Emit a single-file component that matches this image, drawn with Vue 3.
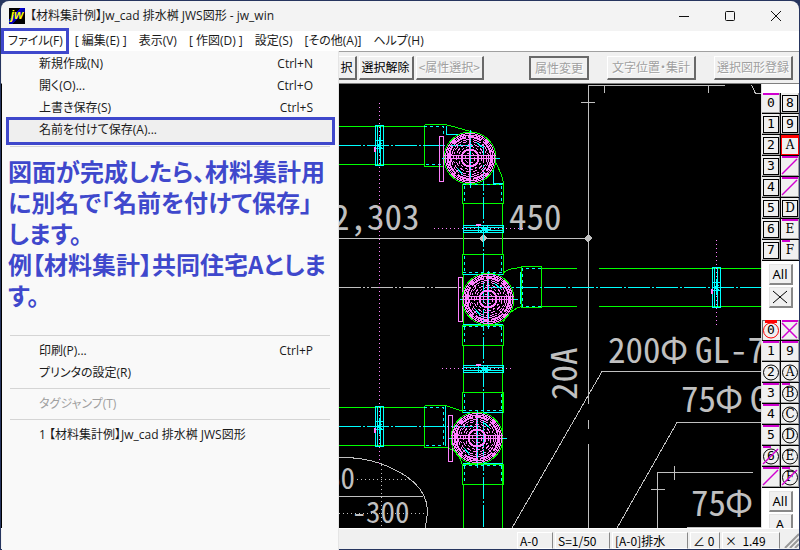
<script setup>
const menus = ['ファイル(F)', '[ 編集(E) ]', '表示(V)', '[ 作図(D) ]', '設定(S)', '[その他(A)]', 'ヘルプ(H)']

const fileItems = [
  { label: '新規作成(N)', key: 'Ctrl+N' },
  { label: '開く(O)...', key: 'Ctrl+O' },
  { label: '上書き保存(S)', key: 'Ctrl+S' },
  { label: '名前を付けて保存(A)...', key: '', active: true }
]

// Layer palettes, row by row (left cell, right cell)
const layers = [
  { t: '0', bar: 'full' }, { t: '8', frame: true },
  { t: '1', frame: true }, { t: '9', frame: true },
  { t: '2', frame: true }, { t: 'A', current: true },
  { t: '3', frame: true }, { t: '', name: 'B', bar: 'full', slash: true },
  { t: '4', frame: true }, { t: '', name: 'C', bar: 'full', slash: true },
  { t: '5', frame: true }, { t: 'D', frame: true },
  { t: '6', frame: true }, { t: 'E', bar: 'full' },
  { t: '7', frame: true }, { t: 'F', bar: 'half' }
]
const groups = [
  { t: '0', ring: true, currentGroup: true }, { t: '', name: '8', bar: 'full', slash: true, cross: true },
  { t: '1', bar: 'full' }, { t: '9', bar: 'full' },
  { t: '2', ring: true }, { t: 'A', ring: true },
  { t: '3', bar: 'full' }, { t: 'B', ring: true, bar: 'half' },
  { t: '4', bar: 'full' }, { t: 'C', ring: true },
  { t: '5', bar: 'full' }, { t: 'D', ring: true },
  { t: '6', ring: true, bar: 'half', slash: true }, { t: 'E', ring: true },
  { t: '', name: '7', bar: 'full', slash: true }, { t: 'F', ring: true, bar: 'half', slash: true }
]

const basins = [
  { x: 470, y: 158 },
  { x: 488, y: 299 },
  { x: 477, y: 438 }
]
const couplingsV = [{ x: 379, y: 145 }, { x: 716, y: 287 }, { x: 379, y: 426 }]
const couplingsH = [{ x: 483, y: 229 }, { x: 483, y: 369 }]
const sockets = [
  { y: 184, h: 19 },
  { y: 254, h: 20 },
  { y: 325, h: 20 },
  { y: 392, h: 20 },
  { y: 464, h: 20 }
]
</script>

<template>
  <div class="window">
    <header class="titlebar">
      <span class="logo">jw</span>
      <h1>【材料集計例】Jw_cad 排水桝 JWS図形 - jw_win</h1>
      <button class="win" aria-label="最小化"><svg width="12" height="12"><path d="M1 6.500H11" /></svg></button>
      <button class="win" aria-label="最大化"><svg width="12" height="12"><rect x="1.500" y="1.500" width="9" height="9" rx="1" /></svg></button>
      <button class="win" aria-label="閉じる"><svg width="12" height="12"><path d="M1 1L11 11M11 1L1 11" /></svg></button>
    </header>

    <nav class="menubar">
      <button v-for="(m, i) in menus" :key="m" :class="{ open: i === 0 }">{{ m }}</button>
    </nav>

    <div class="toolbar">
      <button>択</button>
      <button>選択解除</button>
      <button class="far" disabled>&lt;属性選択&gt;</button>
      <button class="apart default" disabled>属性変更</button>
      <button class="apart" disabled>文字位置・集計</button>
      <button disabled>選択図形登録</button>
    </div>

    <main class="work">
      <svg class="drawing" viewBox="1 84 760 444" preserveAspectRatio="xMaxYMin slice">
        <!-- dimension and leader lines -->
        <g class="gray">
          <path d="M588.500 85V404M588.500 420V429M588.500 444V528M588 85.500H725M604.500 85V93M708.500 85V93M581 102.500H595M751.500 85L755.500 93.500H761" />
          <path d="M339 238.500H588M512 528L602 371.500H761M617 528L677 422.500H761" />
          <path d="M657.500 528V472.500H753M674.500 466V480M651 489.500H665M687 527.500H761" />
          <path d="M339 457.500Q360 457 379 463Q427 480 427.500 511Q427 520 425 528M339 496.500H423" />
          <path d="M339 287.500H462" stroke-dasharray="22 2 2 2 2 2" />
          <path d="M357 479.500H410M339 513.500H427M381.500 465V528" stroke-dasharray="1 3" />
        </g>
        <path class="dot" d="M483 234L487 238L483 243L479 238ZM588 234L592 238L588 243L584 238Z" />

        <g class="cadtext">
          <text x="332" y="230">2,</text><text x="367" y="230">303</text>
          <text x="509" y="230">450</text>
          <text x="608" y="363">200</text><text x="660" y="363">Φ</text><text x="695" y="363">GL-7</text>
          <text x="681" y="412">75</text><text x="715" y="412">Φ</text><text x="750" y="412">G</text>
          <text x="691" y="516">75</text><text x="725" y="516">Φ</text>
          <text transform="translate(577 400) rotate(-90)">20A</text>
          <g class="small">
            <text x="326" y="489">60</text>
            <text x="352" y="523">-</text><text x="366" y="523">300</text>
          </g>
        </g>

        <!-- pipes -->
        <g class="green">
          <path d="M339 126.500H424M339 164.500H424M339 407.500H424M339 445.500H424" />
          <path d="M424.500 124.500H445.500L455 127L472 132M424.500 124.500V166.500H444M424.500 405.500H445.500L462 411M424.500 405.500V447.500H447L458 453L462 464" />
          <path d="M463.500 203V254M502.500 203V254M463.500 274V325M463.500 345V392M502.500 345V528M463.500 484V528" />
          <path d="M496 163Q503 177 503.500 184M503 273Q511 267 521 268M521 306.500Q510 310 503 322" />
          <path d="M521.500 266.500H541.500V307.500H521.500ZM541 268.500H577M541 306.500H577M599 268.500H761M599 306.500H761" />
          <rect v-for="s in sockets" :key="s.y" x="462.500" :y="s.y + 0.5" width="41" :height="s.h" />
        </g>
        <g class="cyan">
          <path d="M446.500 126V134.500H458M493.500 170V183.500H503M463 274.500H503M463 324.500H503M463 412.500H503M463 463.500H503M520.500 272V304M445.500 406V446" />
          <path d="M339 145.500H483.500V528M488 287.500H761M339 426.500H477" stroke-dasharray="22 2 2 2" />
          <g stroke-dasharray="3 3">
            <path d="M424 126.500H443.500V164.500H424M424 407.500H443.500V445.500H424M541 268.500H522.500V306.500H541" />
            <path v-for="s in sockets" :key="s.y" :d="`M464.500 ${s.y + 2}V${s.y + s.h - 1}M501.500 ${s.y + 2}V${s.y + s.h - 1}`" />
            <path d="M463 184.500H503M463 272.500H503M463 326.500H503M463 410.500H503M463 465.500H503" />
          </g>
        </g>
        <g class="pink">
          <path d="M379.500 103V465M434 228.500H526M442 368.500H514M716.500 240V326" stroke-dasharray="1 3" />
          <path d="M439.500 136.500H443.500V181.500H439.500ZM458.500 277.500H462.500V321.500H458.500ZM448.500 415.500H452V461.500H448.500Z" />
        </g>

        <g v-for="c in couplingsV" :key="'v' + c.x + c.y" :transform="`translate(${c.x} ${c.y})`">
          <path class="cyan" d="M-3.500 -19.500H4.500V20.500H-3.500ZM-1.500 -20V21M1.500 -20V21M-3 -4.500H4M-3 3.500H4M-2 -2L3 3M-2 3L3 -2M0 -8V8" />
          <path class="pinkfill" d="M-5 2h2v5h-2z" />
        </g>
        <g v-for="c in couplingsH" :key="'h' + c.y" :transform="`translate(${c.x} ${c.y})`">
          <path class="cyan" d="M-19.500 -3.500H20.500V3.500H-19.500ZM-20 -1.500H20M-20 1.500H20M-4.500 -3V3M4.500 -3V3M-3 -2L4 3M-3 3L4 -2M-1 0.500H8" />
          <path class="pinkfill" d="M-7 -5h5v2h-5z" />
        </g>

        <!-- drainage basins seen from above -->
        <g v-for="b in basins" :key="b.y" :transform="`translate(${b.x} ${b.y})`">
          <circle class="green" r="26" />
          <path class="cyan" d="M-28 0.500H30M0.500 -28V30" />
          <g class="pink">
            <circle r="24.500" />
            <circle r="23" />
            <circle r="21" class="bold" stroke-dasharray="14 2" />
            <circle r="18.500" stroke-dasharray="8 2" />
            <circle r="16.500" stroke-dasharray="4 2 2 2" />
            <circle r="14" stroke-dasharray="5 2" />
            <circle r="11.500" stroke-dasharray="3 2" />
            <circle r="8.500" class="bold" />
            <circle r="5" stroke-dasharray="3 2" />
            <path d="M-26 -2.500H26M-26 0.500H26M-0.500 -25V25M-17 -17L-12 -12M17 17L12 12M17 -17L12 -12M-17 17L-12 12M-22 -5V5M-20 -5V5M20 -5V5M22 -5V5" />
          </g>
          <path class="cyan" d="M6 -16L13 -10M-13 10L-7 17" />
        </g>
      </svg>

      <aside class="palette">
        <template v-for="(set, n) in [layers, groups]" :key="n">
          <div class="cells">
            <button
              v-for="(c, i) in set" :key="i" :aria-label="c.name || c.t"
              :class="{ frame: c.frame, current: c.current, group: c.currentGroup, latin: c.t >= 'A' }"
            >
              <span>{{ c.t }}</span>
              <svg viewBox="0 0 18 20" preserveAspectRatio="none">
                <circle v-if="c.ring" class="ring" cx="9" cy="10.500" r="7.500" />
                <path v-if="c.bar" class="bar" :d="c.bar === 'full' ? 'M1 1H17' : 'M1 1H9'" />
                <path v-if="c.slash" class="slash" d="M1 18L16 3" />
                <path v-if="c.cross" class="slash" d="M1 3L16 18" />
                <path v-if="c.currentGroup" class="top" d="M3 1.500H15" />
              </svg>
            </button>
          </div>
          <button class="wide">All</button>
          <button v-if="n === 0" class="wide" aria-label="×">
            <svg width="16" height="14"><path d="M1 1L15 13M15 1L1 13" /></svg>
          </button>
          <button v-else class="wide">A</button>
        </template>
      </aside>
    </main>

    <footer class="status">
      <button>A-0</button>
      <button class="s2">S=1/50</button>
      <button class="s3">[A-0]排水</button>
      <button class="s4">∠ 0</button>
      <button class="s5">×&nbsp; 1.49</button>
      <svg class="grip" width="16" height="16"><path d="M2 16L16 2M7 16L16 7M12 16L16 12" /></svg>
    </footer>

    <section class="filemenu">
      <button v-for="f in fileItems" :key="f.label" class="item" :class="{ active: f.active }">
        <span>{{ f.label }}</span><span>{{ f.key }}</span>
      </button>
      <hr>
      <p class="note">図面が完成したら、材料集計用に別名で「名前を付けて保存」<br>します。<br>例【材料集計】共同住宅Aとします。</p>
      <hr>
      <button class="item"><span>印刷(P)...</span><span>Ctrl+P</span></button>
      <button class="item"><span>プリンタの設定(R)</span></button>
      <hr>
      <button class="item" disabled><span>タグジャンプ(T)</span></button>
      <hr>
      <button class="item"><span>1 【材料集計例】Jw_cad 排水桝 JWS図形</span></button>
    </section>
  </div>
</template>

<style>
body { margin: 0; background: #1c2a55; }
</style>

<style scoped>
.window {
  position: relative;
  box-sizing: border-box;
  height: 100vh;
  padding: 1px;
  display: flex;
  flex-direction: column;
  overflow: hidden;
  background: #26355f;
  color: #1a1a1a;
  font: 12px/18px "Open Sans", "Noto Sans CJK JP", sans-serif;
  font-feature-settings: "palt";
}
button {
  margin: 0;
  padding: 0;
  border: 0;
  border-radius: 0;
  background: none;
  color: inherit;
  font: inherit;
  font-feature-settings: inherit;
  white-space: nowrap;
}
svg { display: block; fill: none; }

.titlebar {
  flex: none;
  height: 30px;
  display: flex;
  align-items: center;
  padding-left: 8px;
  background: #f3f3f3;
  border-radius: 8px 8px 0 0;
}
.titlebar h1 { flex: 1; margin: 0 0 0 5px; font-size: 12px; font-weight: 400; }
.logo {
  width: 16px;
  height: 16px;
  background: linear-gradient(135deg, #000 35%, #0000d8 36%, #0000a0 60%, #000 61%);
  color: #ff0;
  font: italic bold 12px/14px "Liberation Sans", sans-serif;
  text-align: center;
}
.win { width: 46px; height: 30px; display: grid; place-items: center; }
.win svg { stroke: #111; }

.menubar {
  flex: none;
  height: 20px;
  display: flex;
  gap: 12px;
  padding-left: 7px;
  background: #fff;
  border-bottom: 1px solid #a0a0a0;
}
.menubar button { position: relative; }
.menubar .open::after {
  content: "";
  position: absolute;
  inset: -3px -6px -3px -7px;
  border: 3px solid #3f48cc;
  z-index: 3;
}

.toolbar {
  flex: none;
  box-sizing: border-box;
  height: 32px;
  display: flex;
  align-items: center;
  justify-content: flex-end;
  gap: 2px;
  padding: 0 6px 0 300px;
  background: #f0f0f0;
  border-bottom: 1px solid #808080;
  font-family: "Noto Sans CJK JP", sans-serif;
}
.toolbar button {
  height: 24px;
  padding: 0 2px;
  line-height: 20px;
  border: 1px solid #fff;
  border-right: 2px solid #696969;
  border-bottom: 2px solid #696969;
  background: #f0f0f0;
  color: #000;
}
.toolbar button:disabled { color: #a0a0a0; text-shadow: 1px 1px #fff; }
.toolbar .far { margin-right: 43px; }
.toolbar .apart { margin-right: 16px; padding: 0 4px; }
.toolbar .default { border: 2px solid #696969; }

.work { flex: 1; min-height: 0; display: flex; background: #000; }
.drawing { flex: 1; min-width: 0; height: 100%; background: #000; shape-rendering: crispEdges; }
.gray { stroke: #c0c0c0; }
.dot { fill: #c0c0c0; }
.green { stroke: #0f0; fill: none; }
.cyan { stroke: #0ff; fill: none; }
.pink { stroke: #ff80ff; fill: none; }
.pink .bold { stroke-width: 2; }
.pinkfill { fill: #ff80ff; }
.cadtext {
  fill: #c0c0c0;
  font: 35px "Noto Sans CJK JP", sans-serif;
  font-feature-settings: "hwid";
}
.cadtext .small { font-size: 29px; }

.palette {
  flex: none;
  width: 38px;
  box-sizing: border-box;
  padding-top: 9px;
  display: flex;
  flex-direction: column;
  align-items: center;
  overflow: hidden;
  background: #fff;
  border-left: 1px solid #e0e0e0;
}
.cells {
  align-self: stretch;
  display: grid;
  grid-template-columns: 1fr 1fr;
  grid-auto-rows: 20px;
  gap: 1px;
  margin-bottom: 1px;
  border-bottom: 1px solid #000;
  background: #000;
}
.cells button {
  position: relative;
  background: #f0f0f0;
  color: #000;
  font: 13px/20px "DejaVu Sans Mono", monospace;
  box-shadow: inset -1px -1px #a0a0a0;
}
.cells .latin { font: 12px/20px "DejaVu Serif", serif; }
.cells .frame::before {
  content: "";
  position: absolute;
  inset: 2px 1px 1px 1px;
  border: 1px solid #000;
}
.cells .current { box-shadow: inset 0 0 0 1px #f00, inset 0 3px #f00; }
.cells .group { box-shadow: inset 1px 1px #696969; }
.cells svg { position: absolute; inset: 0; width: 100%; height: 100%; }
.ring { stroke: #000; }
.group .ring { stroke: #f00; }
.bar { stroke: #d000d0; stroke-width: 2; }
.slash { stroke: #d000d0; stroke-width: 1.5; }
.top { stroke: #f00; stroke-width: 3; }
.wide {
  flex: none;
  width: 24px;
  height: 21px;
  margin-top: 2px;
  display: grid;
  place-items: center;
  border: 1px solid #e3e3e3;
  border-right: 2px solid #888;
  border-bottom: 2px solid #888;
  background: #f0f0f0;
  color: #000;
  font: 13px/18px "Noto Sans", sans-serif;
}
.wide svg { stroke: #000; }
.wide + .cells { margin-top: 12px; }

.status {
  flex: none;
  box-sizing: border-box;
  height: 21px;
  display: flex;
  justify-content: flex-end;
  gap: 2px;
  padding-top: 3px;
  background: #f0f0f0;
  border-top: 1px solid #fff;
  font-family: "Noto Sans CJK JP", sans-serif;
}
.status button {
  height: 17px;
  width: 36px;
  padding-left: 2px;
  line-height: 14px;
  text-align: left;
  color: #000;
  border: 1px solid #fff;
  border-right-color: #888;
}
.status .s2 { width: 55px; }
.status .s3 { width: 76px; }
.status .s4 { width: 30px; }
.status .s5 { width: 58px; }
.grip { stroke: #999; stroke-width: 2; margin-left: 1px; }

.filemenu {
  position: absolute;
  left: 2px;
  top: 51px;
  bottom: 0;
  width: 337px;
  box-sizing: border-box;
  padding-top: 2px;
  display: flex;
  flex-direction: column;
  background: #f9f9f9;
  border-right: 1px solid #e5e5e5;
  z-index: 2;
}
.item {
  position: relative;
  flex: none;
  display: flex;
  justify-content: space-between;
  height: 22px;
  padding: 0 25px 0 37px;
  line-height: 22px;
}
.item:disabled { color: #a0a0a0; }
.item span { position: relative; z-index: 1; }
.active::before {
  content: "";
  position: absolute;
  inset: -2px 3px -4px 4px;
  border: 3px solid #3f48cc;
  background: #efefef;
}
.filemenu hr {
  flex: none;
  width: calc(100% - 16px);
  height: 1px;
  margin: 4px auto;
  border: 0;
  background: #d5d5d5;
}
.filemenu .active + hr { margin: 5px auto 4px; }
.note {
  margin: 4px 0 10px 6px;
  color: #3f48cc;
  font: 700 24px/31px "Noto Sans CJK JP", sans-serif;
  font-feature-settings: "palt";
  height: 166px;
}
</style>
